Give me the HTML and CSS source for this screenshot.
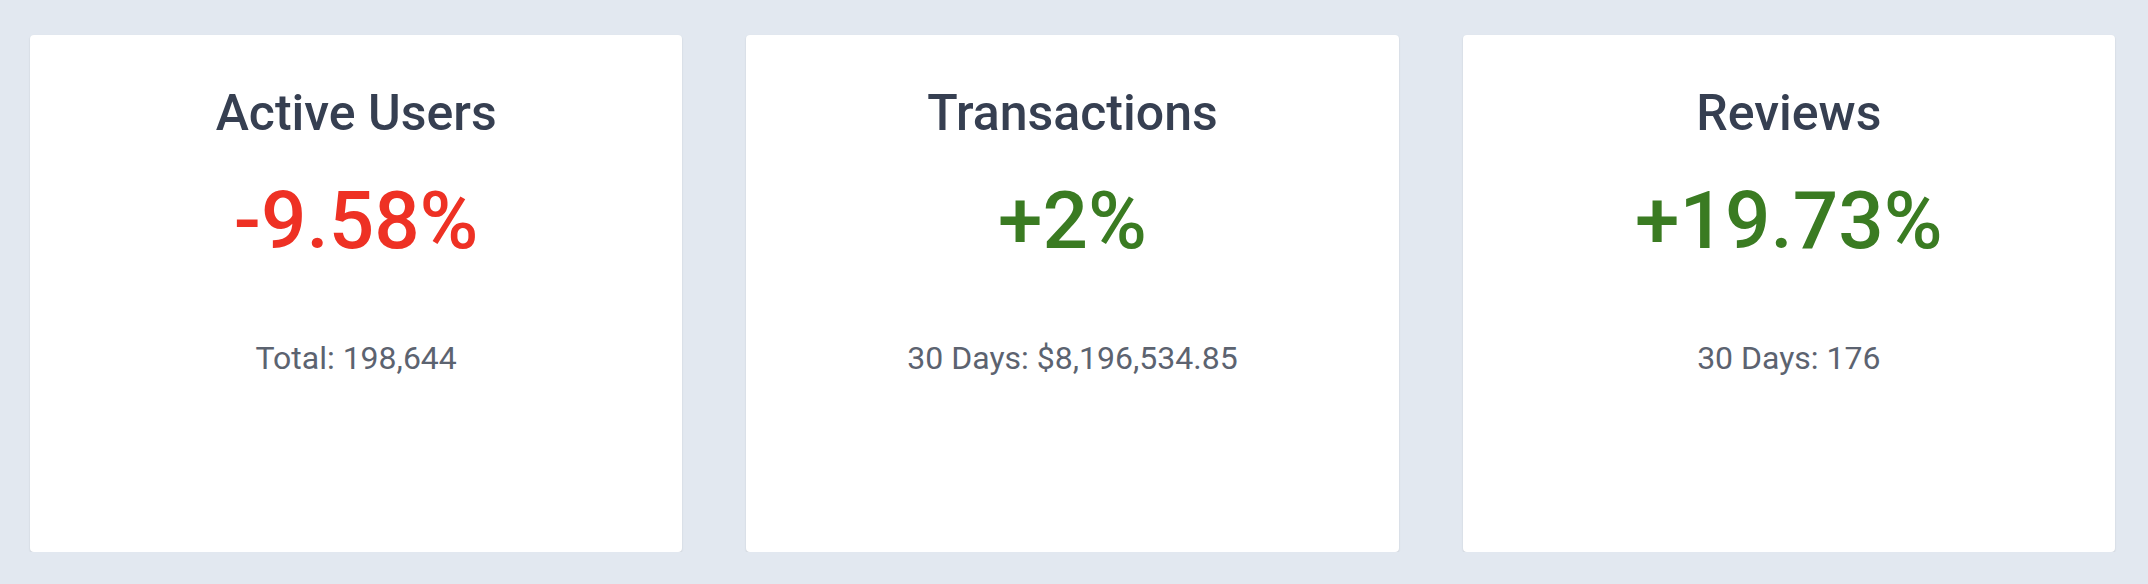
FILE: index.html
```html
<!DOCTYPE html>
<html lang="en">
<head>
<meta charset="utf-8">
<title>Stats</title>
<link rel="stylesheet" href="styles.css">
</head>
<body>
<main class="grid">
  <section class="card">
    <h2 class="title">Active Users</h2>
    <div class="value down">-9.58%</div>
    <p class="sub">Total: 198,644</p>
  </section>
  <section class="card">
    <h2 class="title">Transactions</h2>
    <div class="value up">+2%</div>
    <p class="sub">30 Days: $8,196,534.85</p>
  </section>
  <section class="card">
    <h2 class="title">Reviews</h2>
    <div class="value up">+19.73%</div>
    <p class="sub">30 Days: 176</p>
  </section>
</main>
</body>
</html>
```
FILE: styles.css
```css
html, body {
  margin: 0;
  padding: 0;
  background: #e2e8f0;
  font-family: Roboto, "Liberation Sans", sans-serif;
}
.grid {
  display: grid;
  grid-template-columns: repeat(3, 1fr);
  column-gap: 64px;
  padding: 35px 33px 0 30px;
}
.card {
  background: #ffffff;
  border-radius: 4px;
  box-shadow: 0 1px 2px rgba(0, 0, 0, 0.12);
  height: 517px;
  box-sizing: border-box;
  padding-top: 49px;
  text-align: center;
}
.title {
  margin: 0;
  font-size: 50px;
  font-weight: 500;
  line-height: 1.172;
  color: #363f51;
}
.value {
  margin-top: 32px;
  font-size: 80px;
  font-weight: 500;
  line-height: 1.172;
}
.down { color: #ee3124; }
.up { color: #3a7b22; }
.sub {
  margin: 72px 0 0;
  font-size: 32px;
  line-height: 1.172;
  color: #5c6370;
}
```
